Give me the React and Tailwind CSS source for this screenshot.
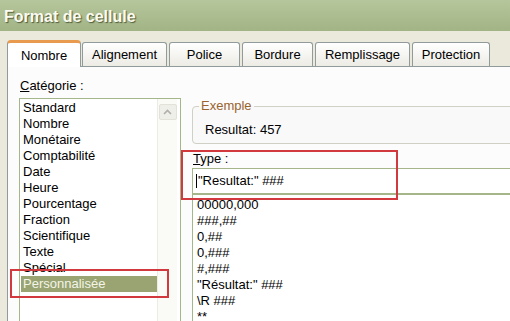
import React from 'react'

const categories = [
  'Standard',
  'Nombre',
  'Monétaire',
  'Comptabilité',
  'Date',
  'Heure',
  'Pourcentage',
  'Fraction',
  'Scientifique',
  'Texte',
  'Spécial',
  'Personnalisée',
]

const formats = [
  '00000,000',
  '###,##',
  '0,##',
  '0,###',
  '#,###',
  '"Résultat:" ###',
  '\\R ###',
  '**',
]

const tabs = [
  { label: 'Alignement', w: 'w-[85px]', ml: 'ml-[1px]' },
  { label: 'Police', w: 'w-[71px]', ml: 'ml-[2px]' },
  { label: 'Bordure', w: 'w-[71px]', ml: 'ml-[2px]' },
  { label: 'Remplissage', w: 'w-[95px]', ml: 'ml-[2px]' },
  { label: 'Protection', w: 'w-[78px]', ml: 'ml-[2px]' },
]

function Tab({ label, w, ml }) {
  return (
    <div
      className={`${w} ${ml} h-[24px] flex items-center justify-center pt-[1px] border border-b-0 border-[#919b9c] rounded-t-[3px] bg-gradient-to-b from-white to-[#ecebe4] text-[13px] text-black`}
    >
      {label}
    </div>
  )
}

export default function App() {
  return (
    <div className="relative w-[510px] h-[321px] overflow-hidden bg-[#ebe9db] font-['Liberation_Sans',Arial,sans-serif] leading-[16px]">
      {/* title bar */}
      <div className="h-[31px] flex items-center pl-[4px] pt-[2px] bg-gradient-to-b from-[#b6c69c] to-[#a2b485]">
        <span className="text-[16px] font-bold text-[#fbfbf2] [text-shadow:1px_1px_1px_rgba(70,82,48,0.9)]">
          Format de cellule
        </span>
      </div>

      {/* tabs */}
      <div className="flex items-end mt-[9px] ml-[7px] h-[26px]">
        <div className="relative z-10 w-[74px] h-[27px] -mb-[1px] flex items-center justify-center pt-[1px] bg-white border border-b-0 border-[#919b9c] border-t-[3px] border-t-[#e89a4e] rounded-t-[4px] text-[13px] text-black">
          Nombre
        </div>
        {tabs.map((t) => (
          <Tab key={t.label} {...t} />
        ))}
      </div>

      {/* panel */}
      <div className="ml-[7px] h-[260px] border-t border-l border-[#919b9c] bg-[#fcfcfd] flex">
        {/* left column */}
        <div className="ml-[11px] mt-[11px] flex flex-col w-[162px]">
          <div className="text-[13px] text-black pl-[1px]">
            <span className="underline">C</span>atégorie :
          </div>
          <div className="mt-[4px] flex flex-1 border border-[#a5b78a] bg-white">
            <div className="w-[137px] pl-[1px] pt-[1px] flex flex-col">
              {categories.map((c) => (
                <div
                  key={c}
                  className={`h-[16px] pl-[2px] text-[13px] whitespace-nowrap ${
                    c === 'Personnalisée' ? 'bg-[#99a472] text-[#f4f4e8]' : 'text-black'
                  }`}
                >
                  {c}
                </div>
              ))}
            </div>
            <div className="w-[20px] border-l border-[#ecece4] bg-[#fafaf7] flex flex-col items-center">
              <div className="mt-[5px] w-[18px] h-[16px] rounded-[2px] border border-[#e2e2da] bg-[#efefe9] flex items-center justify-center">
                <svg width="9" height="6" viewBox="0 0 9 6">
                  <path d="M1 5 L4.5 1.5 L8 5" fill="none" stroke="#b0b0a8" strokeWidth="1.6" />
                </svg>
              </div>
            </div>
            <div className="w-[3px]" />
          </div>
        </div>

        {/* right column */}
        <div className="ml-[11px] mt-[31px] w-[340px] shrink-0 flex flex-col">
          <fieldset className="border border-[#d0d0c4] rounded-[4px] pb-[5px] bg-[#f9f9fa]">
            <legend className="ml-[6px] px-[2px] text-[13px] text-[#9a6330]">Exemple</legend>
            <div className="pt-[8px] pl-[12px] text-[13px] text-black">Resultat: 457</div>
          </fieldset>

          <div className="mt-[7px] pl-[1px] text-[13px] text-black">
            <span className="underline">T</span>ype :
          </div>
          <div className="mt-[1px] h-[26px] border border-[#a5b78a] bg-white flex items-center pl-[3px] text-[13px] text-black">
            <span className="w-[1px] h-[14px] bg-black mr-[1px]" />
            "Resultat:" ###
          </div>
          <div className="flex-1 border border-[#a5b78a] bg-white pt-[2px] pl-[4px]">
            {formats.map((f) => (
              <div key={f} className="h-[16px] text-[13px] text-black whitespace-nowrap">
                {f}
              </div>
            ))}
          </div>
        </div>
      </div>

      {/* annotation boxes */}
      <div className="absolute left-[10px] top-[269px] w-[159px] h-[29px] border-2 border-[#d2393f]" />
      <div className="absolute left-[181px] top-[150px] w-[217px] h-[50px] border-2 border-[#d2393f]" />
    </div>
  )
}
